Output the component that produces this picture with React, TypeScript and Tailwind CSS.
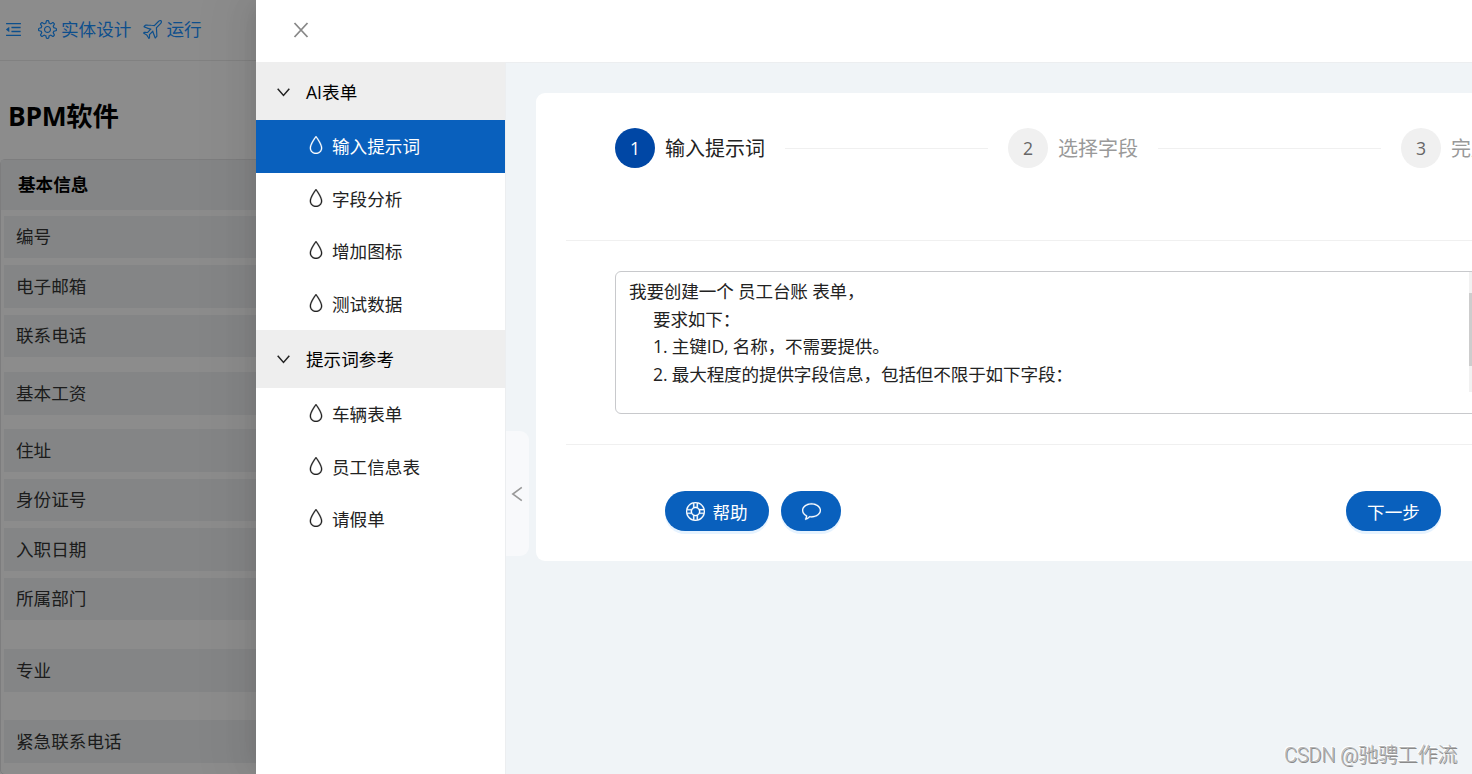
import React from "react";
import { AiOutlineMenuFold } from "react-icons/ai";
import { SlBubble, SlDrop, SlPlane, SlSettings, SlSupport } from "react-icons/sl";

const fields = [
  { label: "编号", cls: "mt-[6px] h-[42px]" },
  { label: "电子邮箱", cls: "mt-[7px] h-[43px]" },
  { label: "联系电话", cls: "mt-[7px] h-[42px]" },
  { label: "基本工资", cls: "mt-[15px] h-[43px]" },
  { label: "住址", cls: "mt-[14px] h-[43px]" },
  { label: "身份证号", cls: "mt-[7px] h-[42px]" },
  { label: "入职日期", cls: "mt-[7px] h-[43px]" },
  { label: "所属部门", cls: "mt-[7px] h-[42px]" },
  { label: "专业", cls: "mt-[29px] h-[43px]" },
  { label: "紧急联系电话", cls: "mt-[28px] h-[43px]" },
];

const groups = [
  { title: "AI表单", items: ["输入提示词", "字段分析", "增加图标", "测试数据"] },
  { title: "提示词参考", items: ["车辆表单", "员工信息表", "请假单"] },
];

function FormPage() {
  return (
    <div className="h-full w-[1472px] bg-white">
      <div className="flex h-[61px] items-center border-b border-[#ececec] pb-[2px] text-[#1890ff]">
        <AiOutlineMenuFold className="ml-[4px] size-[19px]" />
        <SlSettings className="ml-[15px] size-[19px]" />
        <span className="ml-[4px]">实体设计</span>
        <SlPlane className="ml-[12px] size-[19px]" />
        <span className="ml-[4px]">运行</span>
      </div>
      <h1 className="flex h-[98px] items-center pt-[11px] pl-[8px] text-[26.4px] tracking-[-0.3px] font-bold text-black">BPM软件</h1>
      <section className="h-[616px] rounded-[5px] border border-[#e3e4e6]">
        <h2 className="flex h-[50px] items-center bg-[#f0f3f5] pb-[2px] pl-[17px] font-bold text-black">基本信息</h2>
        {fields.map((f) => (
          <div key={f.label} className={`ml-[3px] flex items-center bg-[#f0f3f5] pb-[2px] pl-[12px] text-[#333] ${f.cls}`}>
            {f.label}
          </div>
        ))}
      </section>
    </div>
  );
}

function Sidebar() {
  return (
    <aside className="h-full w-[250px] shrink-0 border-r border-[#eceef0] bg-white">
      {groups.map((g, gi) => (
        <div key={g.title}>
          <div className={`flex h-[58px] items-center bg-[#eee] text-black ${gi === 0 ? "pt-[2px]" : ""}`}>
            <svg className="ml-[21px] h-[9px] w-[13px]" viewBox="0 0 13 9" fill="none" stroke="#222" strokeWidth="1.5">
              <path d="M0.7 0.8 6.5 7.4 12.3 0.8" />
            </svg>
            <span className="ml-[16px]">{g.title}</span>
          </div>
          {g.items.map((item, i) => (
            <div
              key={item}
              className={`flex h-[52.5px] items-center pl-[51px] ${
                gi === 0 && i === 0 ? "bg-[#0960bd] text-white" : "text-[#222]"
              }`}
            >
              <SlDrop className="mb-[2px] size-[18px]" stroke="currentColor" strokeWidth="14" />
              <span className="ml-[7px]">{item}</span>
            </div>
          ))}
        </div>
      ))}
    </aside>
  );
}

function Step({ n, title, active }: { n: number; title: string; active?: boolean }) {
  return (
    <div className="flex w-[393px] shrink-0 items-center">
      <span
        className={`flex size-[40px] shrink-0 items-center justify-center rounded-full ${
          active ? "bg-[#0047a5] text-white" : "bg-[#f0f0f0] text-[#666]"
        }`}
      >
        {n}
      </span>
      <span className={`ml-[10px] shrink-0 pt-[2px] text-[20px] ${active ? "text-[#222]" : "text-[#999]"}`}>{title}</span>
      <span className="mr-[20px] ml-[20px] h-px flex-1 bg-[#f0f0f0]" />
    </div>
  );
}

function PromptBox() {
  return (
    <div className="ml-[79px] flex h-[143px] w-[880px] rounded-[6px] border border-[#c8c9cc]">
      <div className="w-[853px] pt-[6px] pl-[13px] leading-[27.66px] tracking-[-0.16px] whitespace-nowrap text-[#222]">
        <div>我要创建一个 员工台账 表单，</div>
        <div className="pl-[24px]">要求如下：</div>
        <div className="pl-[24px]">1. 主键ID, 名称，不需要提供。</div>
        <div className="pl-[24px]">2. 最大程度的提供字段信息，包括但不限于如下字段：</div>
      </div>
      <div className="h-[120px] w-[17px] bg-[#f1f1f1] pt-[21px]">
        <div className="h-[73px] bg-[#cdcdcd]" />
      </div>
    </div>
  );
}

const button =
  "flex h-[40px] items-center justify-center rounded-full bg-[#0960bd] text-white shadow-[0_3px_0_#e6f3ff]";

export default function App() {
  return (
    <div className="relative h-[774px] w-[1472px] overflow-hidden font-['Open_Sans','Noto_Sans_CJK_SC',sans-serif] text-[17.6px] leading-[28px]">
      <FormPage />
      <div className="absolute inset-0 bg-black/45" />
      <div className="absolute inset-y-0 right-0 left-[256px] flex flex-col bg-white shadow-[-6px_0_16px_-8px_rgba(0,0,0,0.08),-9px_0_28px_0_rgba(0,0,0,0.05),-12px_0_48px_16px_rgba(0,0,0,0.03)]">
        <header className="flex h-[62px] shrink-0 items-center pl-[37px]">
          <svg className="mb-[2px] size-[16px]" viewBox="0 0 16 16" fill="none" stroke="#888" strokeWidth="1.8">
            <path d="M1.5 1 14.5 15M14.5 1 1.5 15" />
          </svg>
        </header>
        <div className="flex min-h-0 flex-1">
          <Sidebar />
          <div className="flex min-w-0 flex-1 overflow-hidden border-t border-[#eceef0] bg-[#f0f4f7]">
            <button className="mt-[368px] flex h-[125px] w-[23px] shrink-0 items-center justify-center rounded-r-[9px] bg-[#f8f9fb]">
              <svg className="mr-[1px] size-[16px]" viewBox="0 0 16 16" fill="none" stroke="#999" strokeWidth="1.6">
                <path d="M12.8 1.3 3.8 8 12.8 14.7" />
              </svg>
            </button>
            <main className="mt-[30px] ml-[7px] flex h-[468px] w-[1000px] shrink-0 flex-col rounded-[9px] bg-white">
              <div className="ml-[79px] flex h-[110px] items-center">
                <Step n={1} title="输入提示词" active />
                <Step n={2} title="选择字段" />
                <Step n={3} title="完成" />
              </div>
              <hr className="mt-[37px] mb-[30px] ml-[30px] border-[#f0f0f0]" />
              <PromptBox />
              <hr className="mt-[30px] mb-[46px] ml-[30px] border-[#f0f0f0]" />
              <div className="flex pl-[129px]">
                <button className={`${button} w-[104px]`}>
                  <SlSupport className="size-[19px]" stroke="currentColor" strokeWidth="14" />
                  <span className="ml-[7px] pt-[1px]">帮助</span>
                </button>
                <button className={`${button} ml-[12px] w-[60px]`}>
                  <SlBubble className="size-[19px]" stroke="currentColor" strokeWidth="14" />
                </button>
                <button className={`${button} ml-[505px] w-[95px] pt-[1px]`}>下一步</button>
              </div>
            </main>
          </div>
        </div>
      </div>
      <div className="absolute top-[741px] right-[15px] font-[Roboto,'Noto_Sans_CJK_SC',sans-serif] text-[20px] tracking-[-0.2px] font-light text-[#b4b4b4] [text-shadow:1px_1px_0_#8a8a8a,-1px_-1px_0_#fff]">
        CSDN @驰骋工作流
      </div>
    </div>
  );
}
